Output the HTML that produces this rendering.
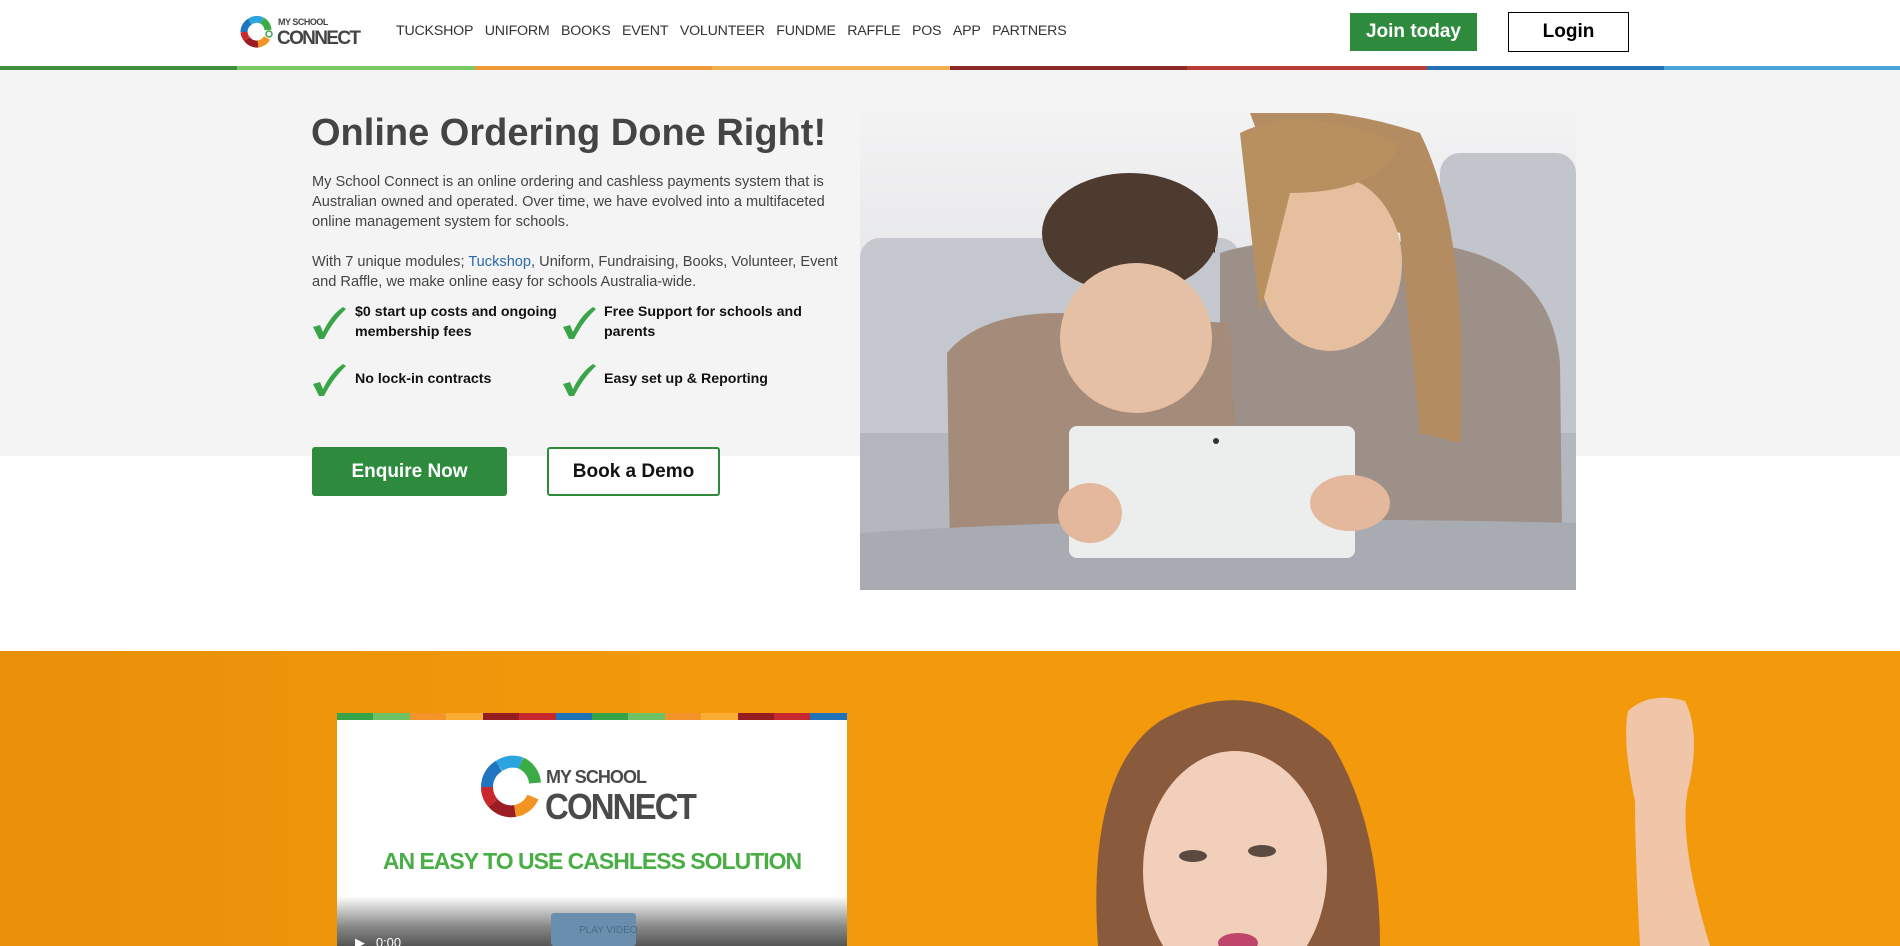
<!DOCTYPE html>
<html><head><meta charset="utf-8"><style>
*{margin:0;padding:0;box-sizing:border-box}
body{width:1900px;height:946px;overflow:hidden;background:#fff;font-family:"Liberation Sans",sans-serif;position:relative;color:#444}
.abs{position:absolute}
.nav{position:absolute;top:23px;left:396px;font-size:14.2px;color:#333;white-space:nowrap;letter-spacing:-0.2px}
.nav span{margin-right:11.5px}
.bar{position:absolute;top:66px;height:4px}
.gray{position:absolute;top:70px;left:0;width:1900px;height:386px;background:#f4f4f4}
h1{position:absolute;left:311px;top:112px;font-size:38px;font-weight:bold;color:#444;letter-spacing:0}
.p{position:absolute;left:312px;width:530px;font-size:14.6px;line-height:20px;color:#444}
.chk{position:absolute;font-size:14.2px;font-weight:bold;color:#111;line-height:20px}
.btn{position:absolute;font-weight:bold;text-align:center}
</style></head><body>
<!-- logo -->
<svg class="abs" style="left:240px;top:14px" width="125" height="36" viewBox="0 0 125 36">
<g fill="none" stroke-width="7">
<path d="M4 18 A12 12 0 0 1 10 7.6" stroke="#1f75c0"/>
<path d="M10 7.6 A12 12 0 0 1 22 6.5" stroke="#2aa5e0"/>
<path d="M22 6.5 A12 12 0 0 1 28 16" stroke="#3aab45"/>
<path d="M27 24 A12 12 0 0 1 18 30" stroke="#f39322"/>
<path d="M18 30 A12 12 0 0 1 7 25" stroke="#9b1c22"/>
<path d="M7 25 A12 12 0 0 1 4 18" stroke="#c8282e"/>
</g>
<circle cx="29" cy="20" r="3" fill="#fff" stroke="#3aab45" stroke-width="1.5"/>
<text x="38" y="11" font-family="Liberation Sans" font-weight="bold" font-size="9" fill="#444" letter-spacing="-0.5">MY SCHOOL</text>
<text x="37" y="30" font-family="Liberation Sans" font-weight="bold" font-size="19" fill="#444" letter-spacing="-1" textLength="83">CONNECT</text>
</svg>
<div class="nav"><span>TUCKSHOP</span><span>UNIFORM</span><span>BOOKS</span><span>EVENT</span><span>VOLUNTEER</span><span>FUNDME</span><span>RAFFLE</span><span>POS</span><span>APP</span><span>PARTNERS</span></div>
<div class="btn" style="left:1350px;top:13px;width:127px;height:38px;background:#2e8b3e;color:#fff;font-size:19px;line-height:38px">Join today</div>
<div class="btn" style="left:1508px;top:12px;width:121px;height:40px;border:1.5px solid #000;color:#000;font-size:19px;line-height:37px">Login</div>
<div class="bar" style="left:0;width:237px;background:#3f8f3f"></div>
<div class="bar" style="left:237px;width:238px;background:#7cc869"></div>
<div class="bar" style="left:475px;width:237px;background:#ef9a38"></div>
<div class="bar" style="left:712px;width:238px;background:#f2b04c"></div>
<div class="bar" style="left:950px;width:237px;background:#8c2a28"></div>
<div class="bar" style="left:1187px;width:240px;background:#b83c36"></div>
<div class="bar" style="left:1427px;width:237px;background:#2472b5"></div>
<div class="bar" style="left:1664px;width:236px;background:#4aa6dc"></div>
<div class="gray"></div>
<h1>Online Ordering Done Right!</h1>
<div class="p" style="top:172px">My School Connect is an online ordering and cashless payments system that is Australian owned and operated. Over time, we have evolved into a multifaceted online management system for schools.</div>
<div class="p" style="top:252px">With 7 unique modules; <span style="color:#2a6aa8">Tuckshop</span>, Uniform, Fundraising, Books, Volunteer, Event and Raffle, we make online easy for schools Australia-wide.</div>
<svg class="abs" style="left:311px;top:305px" width="36" height="36" viewBox="0 0 36 36"><path d="M2 22 L9 20 L12 27 Q20 10 32 2 L35 4 Q22 16 13 34 L8 34 Z" fill="#3aa548"/></svg>
<svg class="abs" style="left:561px;top:305px" width="36" height="36" viewBox="0 0 36 36"><path d="M2 22 L9 20 L12 27 Q20 10 32 2 L35 4 Q22 16 13 34 L8 34 Z" fill="#3aa548"/></svg>
<svg class="abs" style="left:311px;top:362px" width="36" height="36" viewBox="0 0 36 36"><path d="M2 22 L9 20 L12 27 Q20 10 32 2 L35 4 Q22 16 13 34 L8 34 Z" fill="#3aa548"/></svg>
<svg class="abs" style="left:561px;top:362px" width="36" height="36" viewBox="0 0 36 36"><path d="M2 22 L9 20 L12 27 Q20 10 32 2 L35 4 Q22 16 13 34 L8 34 Z" fill="#3aa548"/></svg>
<div class="chk" style="left:355px;top:302px">$0 start up costs and ongoing<br>membership fees</div>
<div class="chk" style="left:604px;top:302px">Free Support for schools and<br>parents</div>
<div class="chk" style="left:355px;top:369px">No lock-in contracts</div>
<div class="chk" style="left:604px;top:369px">Easy set up &amp; Reporting</div>
<div class="btn" style="left:312px;top:447px;width:195px;height:49px;background:#2e8b3e;color:#fff;font-size:19px;line-height:49px;border-radius:3px">Enquire Now</div>
<div class="btn" style="left:547px;top:447px;width:173px;height:49px;border:2px solid #2e8b3e;color:#111;font-size:19px;line-height:45px;border-radius:3px;background:#fff">Book a Demo</div>
<!-- photo -->
<svg class="abs" style="left:860px;top:113px" width="716" height="477" viewBox="0 0 716 477">
<defs><linearGradient id="bg" x1="0" y1="0" x2="0" y2="1"><stop offset="0" stop-color="#f3f3f4"/><stop offset="1" stop-color="#cfd1d5"/></linearGradient></defs>
<rect width="716" height="477" fill="url(#bg)"/>
<rect x="0" y="125" width="380" height="210" rx="20" fill="#c4c7cd"/>
<rect x="580" y="40" width="136" height="300" rx="20" fill="#c2c5cb"/>
<rect x="0" y="320" width="716" height="157" fill="#b4b7bd"/>
<path d="M360 140 Q420 120 560 130 Q690 140 700 250 L702 420 L360 420 Z" fill="#9c9088"/>
<path d="M390 0 Q470 -10 560 20 Q610 120 600 330 L560 320 L540 120 L420 80 Z" fill="#b48c62"/>
<ellipse cx="470" cy="150" rx="72" ry="88" fill="#e6bf9f"/>
<path d="M380 20 Q440 -10 540 30 Q520 80 430 80 L400 200 Z" fill="#b8905f"/>
<path d="M87 240 Q120 200 200 200 L370 210 L380 440 L90 440 Z" fill="#a58b7a"/>
<ellipse cx="270" cy="120" rx="88" ry="60" fill="#4e3b30"/>
<ellipse cx="276" cy="225" rx="76" ry="75" fill="#e6c0a4"/>
<path d="M190 140 Q270 80 355 140 L355 110 Q270 50 190 110 Z" fill="#4e3b30"/>
<path d="M0 420 Q300 400 716 410 L716 477 L0 477 Z" fill="#a8abb1"/>
<rect x="209" y="313" width="286" height="132" rx="8" fill="#eceded"/>
<circle cx="356" cy="328" r="3" fill="#333"/>
<ellipse cx="230" cy="400" rx="32" ry="30" fill="#e4b89c"/>
<ellipse cx="490" cy="390" rx="40" ry="28" fill="#e4b89c"/>
</svg>
<!-- orange section -->
<div class="abs" style="left:0;top:651px;width:1900px;height:295px;background:#f29a0c"></div>
<div class="abs" style="left:0;top:651px;width:700px;height:295px;background:linear-gradient(90deg,#e98f0a,#f29a0c)"></div>
<!-- video -->
<div class="abs" style="left:337px;top:713px;width:510px;height:233px;background:#fff;overflow:hidden">
<div style="display:flex;height:7px">
<div style="flex:1;background:#37a349"></div><div style="flex:1;background:#6fc165"></div><div style="flex:1;background:#f3932a"></div><div style="flex:1;background:#f9ad34"></div><div style="flex:1;background:#951d22"></div><div style="flex:1;background:#c7282e"></div><div style="flex:1;background:#1f71b8"></div><div style="flex:1;background:#37a349"></div><div style="flex:1;background:#6fc165"></div><div style="flex:1;background:#f3932a"></div><div style="flex:1;background:#f9ad34"></div><div style="flex:1;background:#951d22"></div><div style="flex:1;background:#c7282e"></div><div style="flex:1;background:#1f71b8"></div>
</div>
<svg class="abs" style="left:142px;top:42px" width="230" height="70" viewBox="0 0 230 70">
<g fill="none" stroke-width="12">
<path d="M8 32 A24 24 0 0 1 20 11" stroke="#1f75c0"/>
<path d="M20 11 A24 24 0 0 1 42 8" stroke="#2aa5e0"/>
<path d="M42 8 A24 24 0 0 1 56 28" stroke="#3aab45"/>
<path d="M54 42 A24 24 0 0 1 36 56" stroke="#f39322"/>
<path d="M36 56 A24 24 0 0 1 14 48" stroke="#9b1c22"/>
<path d="M14 48 A24 24 0 0 1 8 32" stroke="#c8282e"/>
</g>
<circle cx="56" cy="34" r="5" fill="#fff"/>
<text x="67" y="28" font-family="Liberation Sans" font-weight="bold" font-size="18" fill="#4a4a4a" letter-spacing="-1" textLength="100">MY SCHOOL</text>
<text x="66" y="64" font-family="Liberation Sans" font-weight="bold" font-size="36" fill="#4a4a4a" letter-spacing="-2" textLength="150" lengthAdjust="spacingAndGlyphs">CONNECT</text>
</svg>
<div class="abs" style="left:0;top:135px;width:510px;text-align:center;color:#4aae46;font-weight:bold;font-size:23px;letter-spacing:-1px">AN EASY TO USE CASHLESS SOLUTION</div>
<div class="abs" style="left:0;top:183px;width:510px;height:50px;background:linear-gradient(#fff,#8a8a8a 60%,#555)"></div>
<div class="abs" style="left:214px;top:200px;width:85px;height:33px;background:#6a8fae;border-radius:3px;color:#4a6a86;font-size:10px;padding:12px 0 0 28px;white-space:nowrap">PLAY VIDEO</div>
<div class="abs" style="left:18px;top:222px;color:#fff;font-size:13px">▶&nbsp;&nbsp;&nbsp;0:00</div>
</div>
<!-- girl -->
<svg class="abs" style="left:1050px;top:651px" width="850" height="295" viewBox="0 0 850 295">
<path d="M48 295 Q36 120 110 70 Q200 20 280 90 Q330 170 330 295 Z" fill="#8a5a3c"/>
<ellipse cx="185" cy="220" rx="92" ry="120" fill="#f2cfbb"/>
<path d="M92 160 Q110 60 195 60 Q275 70 295 160 Q250 80 185 85 Q120 90 92 160 Z" fill="#8a5a3c"/>
<ellipse cx="143" cy="205" rx="14" ry="6" fill="#5a4a40"/>
<ellipse cx="212" cy="200" rx="14" ry="6" fill="#5a4a40"/>
<ellipse cx="188" cy="292" rx="20" ry="10" fill="#c0456a"/>
<path d="M590 295 Q585 200 585 150 Q572 90 578 60 Q600 40 635 50 Q650 80 640 130 Q625 180 660 295 Z" fill="#f0c5a8"/>
</svg>
</body></html>
